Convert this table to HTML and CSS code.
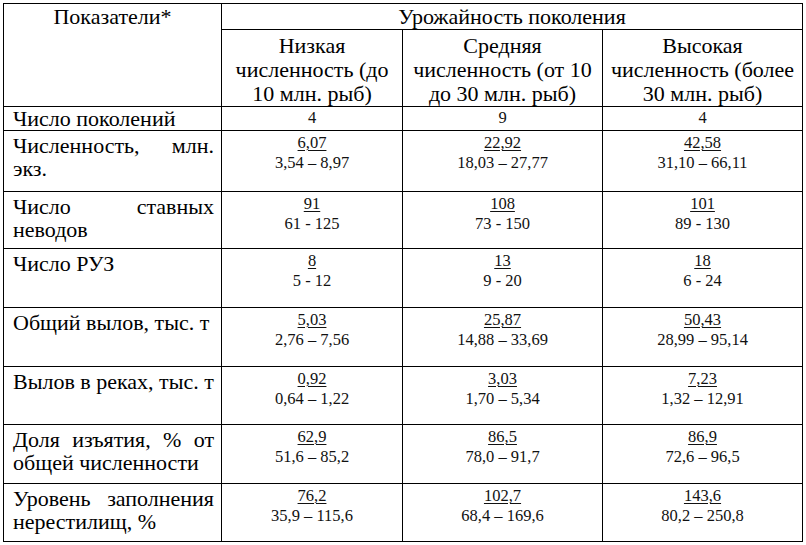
FILE: index.html
```html
<!DOCTYPE html>
<html lang="ru">
<head>
<meta charset="utf-8">
<title>Урожайность поколения</title>
<link rel="stylesheet" href="styles.css">
</head>
<body>
<table class="tbl">
  <colgroup>
    <col class="c1"><col class="c2"><col class="c3"><col class="c4">
  </colgroup>
  <tr class="h1">
    <th rowspan="2" class="head-lab">Показатели*</th>
    <th colspan="3" class="head-top">Урожайность поколения</th>
  </tr>
  <tr class="h2">
    <th class="head-sub">Низкая<br>численность (до<br>10 млн. рыб)</th>
    <th class="head-sub">Средняя<br>численность (от 10<br>до 30 млн. рыб)</th>
    <th class="head-sub">Высокая<br>численность (более<br>30 млн. рыб)</th>
  </tr>
  <tr class="r0">
    <td class="lab">Число поколений</td>
    <td class="num">4</td>
    <td class="num">9</td>
    <td class="num">4</td>
  </tr>
  <tr class="r2">
    <td class="lab">Численность, млн. экз.</td>
    <td class="num"><span class="m">6,07</span><br>3,54 – 8,97</td>
    <td class="num"><span class="m">22,92</span><br>18,03 – 27,77</td>
    <td class="num"><span class="m">42,58</span><br>31,10 – 66,11</td>
  </tr>
  <tr class="r3">
    <td class="lab">Число ставных неводов</td>
    <td class="num"><span class="m">91</span><br>61 - 125</td>
    <td class="num"><span class="m">108</span><br>73 - 150</td>
    <td class="num"><span class="m">101</span><br>89 - 130</td>
  </tr>
  <tr class="r4">
    <td class="lab">Число РУЗ</td>
    <td class="num"><span class="m">8</span><br>5 - 12</td>
    <td class="num"><span class="m">13</span><br>9 - 20</td>
    <td class="num"><span class="m">18</span><br>6 - 24</td>
  </tr>
  <tr class="r5">
    <td class="lab one">Общий вылов, тыс. т</td>
    <td class="num"><span class="m">5,03</span><br>2,76 – 7,56</td>
    <td class="num"><span class="m">25,87</span><br>14,88 – 33,69</td>
    <td class="num"><span class="m">50,43</span><br>28,99 – 95,14</td>
  </tr>
  <tr class="r6">
    <td class="lab one">Вылов в реках, тыс. т</td>
    <td class="num"><span class="m">0,92</span><br>0,64 – 1,22</td>
    <td class="num"><span class="m">3,03</span><br>1,70 – 5,34</td>
    <td class="num"><span class="m">7,23</span><br>1,32 – 12,91</td>
  </tr>
  <tr class="r7">
    <td class="lab">Доля изъятия, % от общей численности</td>
    <td class="num"><span class="m">62,9</span><br>51,6 – 85,2</td>
    <td class="num"><span class="m">86,5</span><br>78,0 – 91,7</td>
    <td class="num"><span class="m">86,9</span><br>72,6 – 96,5</td>
  </tr>
  <tr class="r8">
    <td class="lab">Уровень заполнения нерестилищ, %</td>
    <td class="num"><span class="m">76,2</span><br>35,9 – 115,6</td>
    <td class="num"><span class="m">102,7</span><br>68,4 – 169,6</td>
    <td class="num"><span class="m">143,6</span><br>80,2 – 250,8</td>
  </tr>
</table>
</body>
</html>
```
FILE: styles.css
```css
html, body {
  margin: 0;
  padding: 0;
  background: #fff;
}
body {
  padding: 3px 0 0 3px;
  font-family: "Liberation Serif", "Times New Roman", serif;
  color: #000;
}
.tbl {
  border-collapse: collapse;
  table-layout: fixed;
  width: 799px;
}
.c1 { width: 218px; }
.c2 { width: 181px; }
.c3 { width: 200px; }
.c4 { width: 200px; }
.tbl th,
.tbl td {
  border: 1px solid #000;
  padding: 0;
  vertical-align: top;
  font-weight: normal;
}
.h1 { height: 26px; }
.h2 { height: 77px; }
.r0 { height: 23px; }
.r2 { height: 61px; }
.r3 { height: 57px; }
.r4 { height: 59px; }
.r5 { height: 59px; }
.r6 { height: 58px; }
.r7 { height: 59px; }
.r8 { height: 58px; }

.tbl .head-lab,
.tbl .head-top {
  font-size: 22px;
  line-height: 24px;
  text-align: center;
  padding-top: 1px;
}
.tbl .head-sub {
  font-size: 22px;
  line-height: 24px;
  text-align: center;
  padding-top: 4px;
}
.tbl .lab {
  font-size: 22px;
  line-height: 23px;
  text-align: justify;
  padding: 3px 7px 0 9px;
}
.tbl .r0 .lab {
  padding-top: 0;
}
.tbl .one { white-space: nowrap; }
.tbl .num {
  font-size: 16.5px;
  line-height: 20px;
  text-align: center;
  padding-top: 2px;
  color: #111;
}
.tbl .r0 .num { padding-top: 1px; }
.m {
  text-decoration: underline;
  text-decoration-thickness: 1px;
  text-underline-offset: 2px;
}
```
